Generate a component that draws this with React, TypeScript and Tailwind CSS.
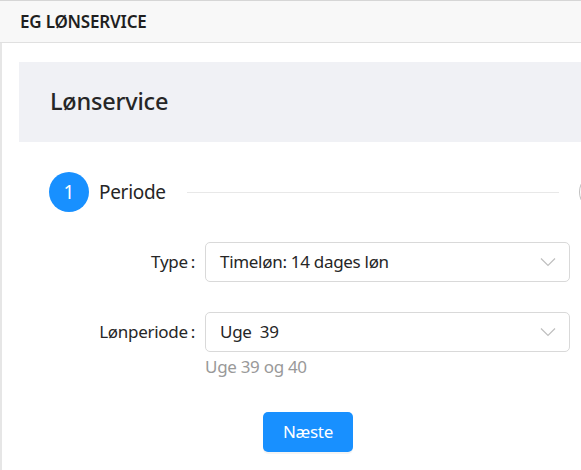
import React from "react";

function Chevron() {
  return (
    <svg width="16" height="10" viewBox="0 0 16 10" fill="none" className="text-[#bfbfbf]">
      <path d="M1 1.5 L8 8.5 L15 1.5" stroke="currentColor" strokeWidth="1.2" />
    </svg>
  );
}

function SelectBox({ value }: { value: string }) {
  return (
    <div className="flex h-[40px] w-[365px] items-center justify-between rounded-[5px] border border-[#d9d9d9] bg-white pl-[14px] pr-[13px]">
      <span className="whitespace-pre text-[17px] tracking-[-0.3px] text-[#262626]">{value}</span>
      <Chevron />
    </div>
  );
}

export default function App() {
  return (
    <div
      className="relative h-[470px] w-[581px] overflow-hidden bg-white"
      style={{ fontFamily: '"Segoe UI", "Noto Sans", "Open Sans", sans-serif' }}
    >
      <div className="flex h-[43px] items-center border-t border-b border-t-[#d6d6d6] border-b-[#e0e0e0] bg-[#f8f8f8] pl-[20px]">
        <span className="text-[17px] font-semibold tracking-[-0.2px] text-[#1f1f1f]">EG LØNSERVICE</span>
      </div>
      <div className="h-[427px] border-l-2 border-[#e6e6e6] pl-[17px] pt-[19px]">
        <div className="flex h-[80px] items-center bg-[#f0f1f5] pl-[31px]">
          <span className="text-[23.5px] font-medium tracking-[-0.2px] text-[#262626]">Lønservice</span>
        </div>
        <div className="mt-[30px] flex items-center pl-[30px]">
          <div className="flex h-[40px] w-[40px] shrink-0 items-center justify-center rounded-full bg-[#1890ff] text-[19px] text-white">1</div>
          <span className="ml-[10px] shrink-0 text-[19px] tracking-[-0.3px] text-[#262626]">Periode</span>
          <div className="ml-[21px] h-px w-[372px] shrink-0 bg-[#e8e8e8]" />
          <div className="ml-[20px] h-[40px] w-[40px] shrink-0 rounded-full border border-[#bfbfbf]" />
        </div>
        <div className="mt-[30px] flex items-center">
          <div className="w-[186px] text-right text-[17px] tracking-[-0.3px] text-[#262626]">
            Type<span className="ml-[3px] mr-[10px]">:</span>
          </div>
          <SelectBox value="Timeløn: 14 dages løn" />
        </div>
        <div className="mt-[30px] flex items-center">
          <div className="w-[186px] text-right text-[17px] tracking-[-0.3px] text-[#262626]">
            Lønperiode<span className="ml-[3px] mr-[10px]">:</span>
          </div>
          <SelectBox value="Uge  39" />
        </div>
        <div className="ml-[186px] mt-[2px] text-[17px] tracking-[-0.3px] text-[#999999]">Uge 39 og 40</div>
        <div className="ml-[244px] mt-[32px]">
          <button className="h-[40px] w-[90px] rounded-[5px] bg-[#1890ff] text-[17px] tracking-[-0.3px] text-white shadow-[0_2px_0_rgba(0,0,0,0.045)]">
            Næste
          </button>
        </div>
      </div>
    </div>
  );
}
